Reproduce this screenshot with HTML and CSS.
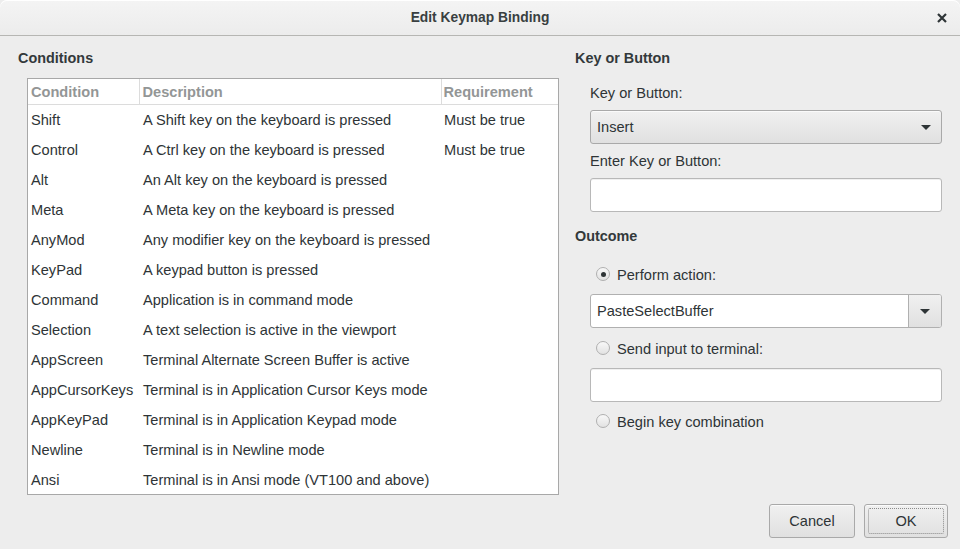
FILE: index.html
```html
<!DOCTYPE html>
<html>
<head>
<meta charset="utf-8">
<link rel="stylesheet" href="styles.css">
</head>
<body>
<div class="window">
  <div class="titlebar">
    <span class="title">Edit Keymap Binding</span>
    <span class="close"><svg width="10" height="10" viewBox="0 0 10 10"><path d="M1 1 L9 9 M9 1 L1 9" stroke="#2e3436" stroke-width="2.2" fill="none"/></svg></span>
  </div>
  <div class="content">
    <section class="left">
      <h2 class="heading">Conditions</h2>
      <div class="tablebox">
        <table class="cond">
          <thead>
            <tr><th class="c1">Condition</th><th class="c2">Description</th><th class="c3">Requirement</th></tr>
          </thead>
          <tbody>
            <tr><td>Shift</td><td>A Shift key on the keyboard is pressed</td><td>Must be true</td></tr>
            <tr><td>Control</td><td>A Ctrl key on the keyboard is pressed</td><td>Must be true</td></tr>
            <tr><td>Alt</td><td>An Alt key on the keyboard is pressed</td><td></td></tr>
            <tr><td>Meta</td><td>A Meta key on the keyboard is pressed</td><td></td></tr>
            <tr><td>AnyMod</td><td>Any modifier key on the keyboard is pressed</td><td></td></tr>
            <tr><td>KeyPad</td><td>A keypad button is pressed</td><td></td></tr>
            <tr><td>Command</td><td>Application is in command mode</td><td></td></tr>
            <tr><td>Selection</td><td>A text selection is active in the viewport</td><td></td></tr>
            <tr><td>AppScreen</td><td>Terminal Alternate Screen Buffer is active</td><td></td></tr>
            <tr><td>AppCursorKeys</td><td>Terminal is in Application Cursor Keys mode</td><td></td></tr>
            <tr><td>AppKeyPad</td><td>Terminal is in Application Keypad mode</td><td></td></tr>
            <tr><td>Newline</td><td>Terminal is in Newline mode</td><td></td></tr>
            <tr><td>Ansi</td><td>Terminal is in Ansi mode (VT100 and above)</td><td></td></tr>
          </tbody>
        </table>
      </div>
    </section>
    <section class="right">
      <h2 class="heading">Key or Button</h2>
      <div class="indent">
        <div class="label l-key">Key or Button:</div>
        <div class="combo button-combo">
          <span class="combo-text">Insert</span>
          <span class="arrow"></span>
        </div>
        <div class="label l-enter">Enter Key or Button:</div>
        <div class="entry e-key"></div>
      </div>
      <h2 class="heading h-outcome">Outcome</h2>
      <div class="indent">
        <div class="radio-row r1"><span class="radio checked"></span><span class="rtext">Perform action:</span></div>
        <div class="combo entry-combo">
          <span class="combo-text">PasteSelectBuffer</span>
          <span class="combo-btn"><span class="arrow"></span></span>
        </div>
        <div class="radio-row r2"><span class="radio"></span><span class="rtext">Send input to terminal:</span></div>
        <div class="entry e-send"></div>
        <div class="radio-row r3"><span class="radio"></span><span class="rtext">Begin key combination</span></div>
      </div>
    </section>
  </div>
  <div class="footer">
    <button class="btn">Cancel</button>
    <button class="btn ok"><span class="focus">OK</span></button>
  </div>
</div>
</body>
</html>
```

FILE: styles.css
```css
* { box-sizing: border-box; }
html, body { margin: 0; padding: 0; }
body {
  font-family: "Liberation Sans", Arial, sans-serif;
  font-size: 14.6px;
  color: #2e3436;
  background: #ededed;
}
.window {
  width: 960px;
  height: 549px;
  display: flex;
  flex-direction: column;
  background: #ededed;
}
.titlebar {
  height: 36px;
  flex: 0 0 36px;
  display: flex;
  align-items: center;
  justify-content: center;
  position: relative;
  background: linear-gradient(#f4f4f4, #ececec);
  border-bottom: 1px solid #b6b6b3;
  border-top-left-radius: 7px;
  border-top-right-radius: 7px;
  box-shadow: inset 0 1px #ffffff;
}
.title {
  font-weight: bold;
  font-size: 13.8px;
  color: #393f41;
}
.close {
  position: absolute;
  right: 13px;
  top: 13px;
  width: 10px;
  height: 10px;
  display: flex;
}
.content {
  display: flex;
  padding: 12px 18px 0 18px;
  gap: 16px;
}
.heading {
  margin: 0;
  font-size: 14.4px;
  font-weight: bold;
  line-height: 20px;
  height: 20px;
  color: #33393b;
}
.left { width: 541px; }
.tablebox {
  margin: 10px 0 0 9px;
  width: 532px;
  height: 417px;
  border: 1px solid #a8a8a8;
  background: #fff;
}
.cond {
  border-collapse: collapse;
  width: 100%;
  table-layout: fixed;
}
.cond th {
  font-weight: bold;
  color: #939696;
  text-align: left;
  height: 25px;
  padding: 1px 0 0 3px;
  border-bottom: 1px solid #dcdcdc;
  border-right: 1px solid #dcdcdc;
  line-height: 24px;
}
.cond th.c3 { border-right: none; padding-left: 2px; }
.c1 { width: 111px; }
.c2 { width: 302px; }
.c3 { width: 117px; }
.cond td {
  height: 30px;
  padding: 0 0 0 3px;
  white-space: nowrap;
  line-height: 30px;
}
.cond td + td { padding-left: 4px; }
.cond td:last-child { padding-left: 3px; }
.right { width: 367px; }
.indent { padding-left: 15px; }
.label { line-height: 22px; height: 20px; }
.l-key { margin-top: 14px; }
.l-enter { margin-top: 6px; }
.combo {
  height: 34px;
  border-radius: 3px;
  display: flex;
  align-items: center;
}
.button-combo {
  margin-top: 8px;
  border: 1px solid #a9a9a9;
  background: linear-gradient(#f0f0f0, #e0e0e0);
  padding: 0 10px 0 6px;
  justify-content: space-between;
  box-shadow: inset 0 1px #fafafa;
}
.arrow {
  width: 0;
  height: 0;
  border-left: 5px solid transparent;
  border-right: 5px solid transparent;
  border-top: 5px solid #2e3436;
  margin-top: 1px;
}
.entry {
  height: 34px;
  border: 1px solid #b8b8b8;
  border-radius: 3px;
  background: #fff;
  box-shadow: inset 0 1px #f0f0f0;
}
.e-key { margin-top: 8px; }
.h-outcome { margin-top: 14px; }
.radio-row {
  display: flex;
  align-items: center;
  height: 20px;
  padding-left: 6px;
  gap: 7px;
}
.rtext { padding-top: 1px; }
.r1 { margin-top: 18px; }
.r2 { margin-top: 10px; }
.r3 { margin-top: 9px; }
.radio {
  width: 14px;
  height: 14px;
  border-radius: 50%;
  border: 1px solid #b0b0b0;
  background: linear-gradient(#f8f8f8, #e2e2e2);
  display: flex;
  align-items: center;
  justify-content: center;
}
.radio.checked::after {
  content: "";
  width: 5px;
  height: 5px;
  border-radius: 50%;
  background: #2e3436;
}
.entry-combo {
  margin-top: 10px;
  border: 1px solid #b0b0b0;
  background: #fff;
  padding-left: 6px;
  justify-content: space-between;
  overflow: hidden;
}
.combo-btn {
  width: 33px;
  height: 100%;
  border-left: 1px solid #b0b0b0;
  background: linear-gradient(#f0f0f0, #e0e0e0);
  display: flex;
  align-items: center;
  justify-content: center;
}
.e-send { margin-top: 10px; }
.footer {
  margin-top: auto;
  display: flex;
  justify-content: flex-end;
  gap: 9px;
  padding: 0 12px 11px 0;
}
.btn {
  font: inherit;
  color: #2e3436;
  height: 34px;
  width: 86px;
  border: 1px solid #a9a9a9;
  border-radius: 3px;
  background: linear-gradient(#f0f0f0, #e0e0e0);
  box-shadow: inset 0 1px #fafafa;
  padding: 0;
}
.btn.ok {
  width: 84px;
  padding: 3px;
  display: flex;
}
.focus {
  flex: 1;
  border: 1px dotted #8a8a8a;
  border-radius: 2px;
  display: flex;
  align-items: center;
  justify-content: center;
}
```
